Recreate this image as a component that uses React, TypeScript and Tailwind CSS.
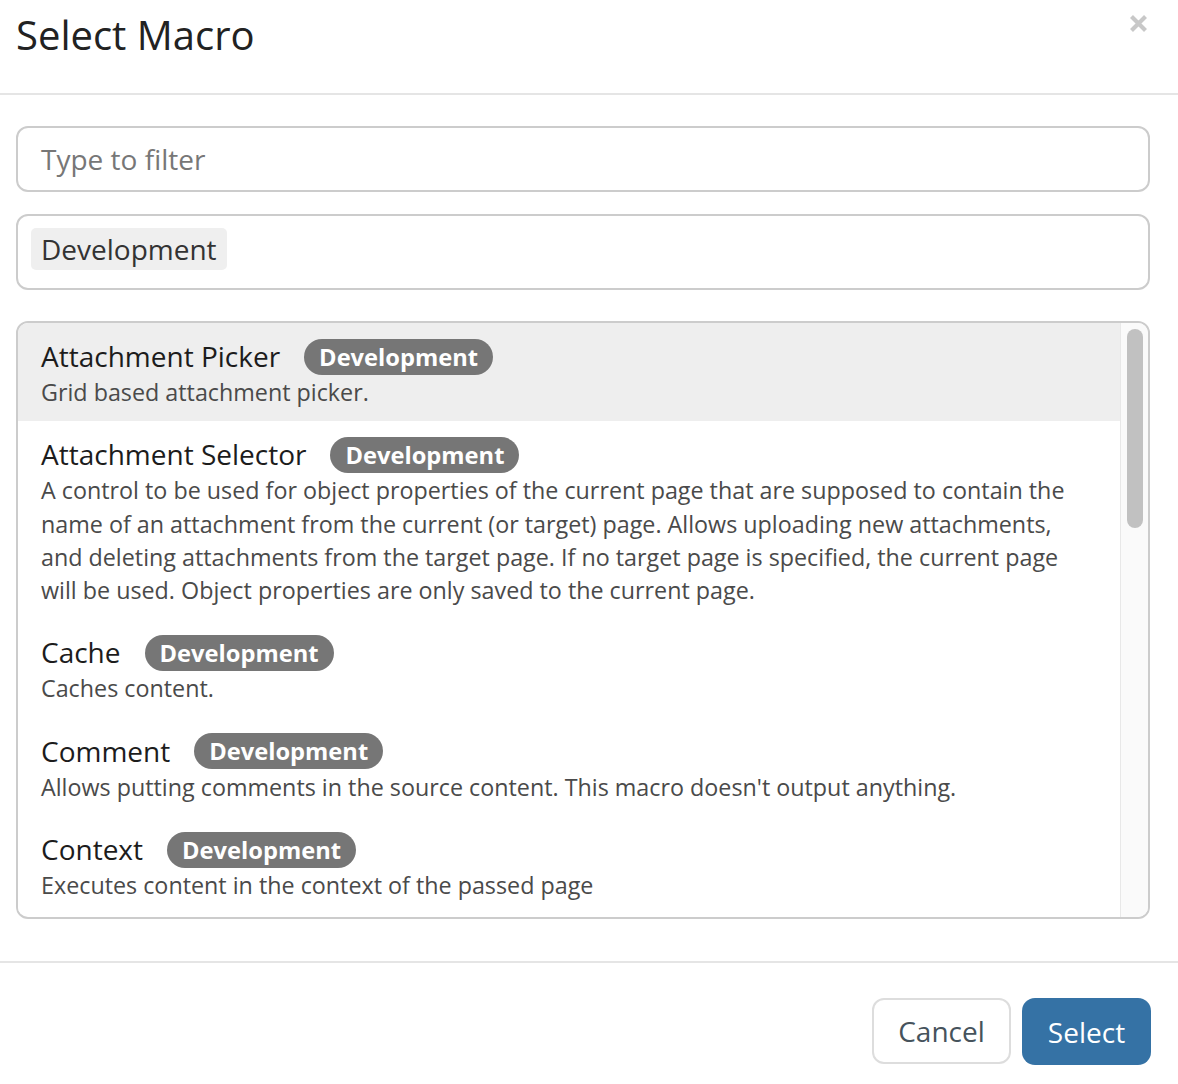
import React from "react";

const items = [
  { name: "Attachment Picker", desc: "Grid based attachment picker.", active: true },
  {
    name: "Attachment Selector",
    desc: "A control to be used for object properties of the current page that are supposed to contain the name of an attachment from the current (or target) page. Allows uploading new attachments, and deleting attachments from the target page. If no target page is specified, the current page will be used. Object properties are only saved to the current page.",
  },
  { name: "Cache", desc: "Caches content." },
  { name: "Comment", desc: "Allows putting comments in the source content. This macro doesn't output anything." },
  { name: "Context", desc: "Executes content in the context of the passed page" },
];

export default function App() {
  return (
    <div
      className="w-[1178px] h-[1084px] bg-white overflow-hidden"
      style={{ fontFamily: '"Open Sans", "Noto Sans", sans-serif' }}
    >
      {/* Header */}
      <div className="h-[95px] border-b-[2px] border-[#e5e5e5] flex justify-between pl-[16px] pr-[30px] pt-[13px]">
        <h1 className="text-[40px] leading-[44px] text-[#222222] font-normal">Select Macro</h1>
        <button className="w-[19px] h-[19px] mt-[1px]" aria-label="Close">
          <svg viewBox="0 0 19 19" width="19" height="19">
            <path d="M2.5 2.5 L16.5 16.5 M16.5 2.5 L2.5 16.5" stroke="#c8c8c8" strokeWidth="4.2" strokeLinecap="butt" />
          </svg>
        </button>
      </div>

      {/* Body */}
      <div className="pl-[16px] pr-[28px] pt-[31px] pb-[42px] flex flex-col">
        <div className="h-[66px] border-[2px] border-[#cccccc] rounded-[12px] flex items-center pl-[23px]">
          <span className="text-[28px] text-[#777777] leading-[38px]">Type to filter</span>
        </div>

        <div className="mt-[22px] h-[76px] border-[2px] border-[#cccccc] rounded-[12px] flex items-start pt-[12px] pl-[13px]">
          <span className="h-[42px] px-[10px] rounded-[5px] bg-[#efefef] text-[28px] leading-[42px] text-[#333333]">
            Development
          </span>
        </div>

        <div className="mt-[31px] h-[598px] border-[2px] border-[#cccccc] rounded-[12px] overflow-hidden flex">
          <div className="flex-1 overflow-hidden">
            {items.map((it) => (
              <div
                key={it.name}
                className={`pt-[14px] pb-[12px] pl-[23px] pr-[22px] ${it.active ? "bg-[#eeeeee]" : "bg-white"}`}
              >
                <div className="flex items-center h-[39px]">
                  <span className="text-[28px] leading-[39px] text-[#1c1c1c]">{it.name}</span>
                  <span className="ml-[24px] h-[36px] px-[15px] rounded-full bg-[#767676] text-white font-bold text-[23.7px] leading-[36px]">
                    Development
                  </span>
                </div>
                <p className="text-[23.3px] leading-[33.3px] text-[#4a4a4a]">{it.desc}</p>
              </div>
            ))}
          </div>
          <div className="w-[28px] bg-[#fafafa] border-l border-[#e8e8e8] pt-[6px] pl-[6px] pr-[4px]">
            <div className="w-[16px] h-[199px] rounded-full bg-[#c1c1c1]" />
          </div>
        </div>
      </div>

      {/* Footer */}
      <div className="border-t-[2px] border-[#e5e5e5] pt-[35px] pr-[27px] flex justify-end gap-[11px]">
        <button className="w-[139px] h-[66px] border-[2px] border-[#dddddd] rounded-[12px] bg-white text-[28px] text-[#46535c] leading-[38px]">
          Cancel
        </button>
        <button className="w-[129px] h-[67px] rounded-[13px] bg-[#3572a5] text-[28px] text-white leading-[38px]">
          Select
        </button>
      </div>
    </div>
  );
}
